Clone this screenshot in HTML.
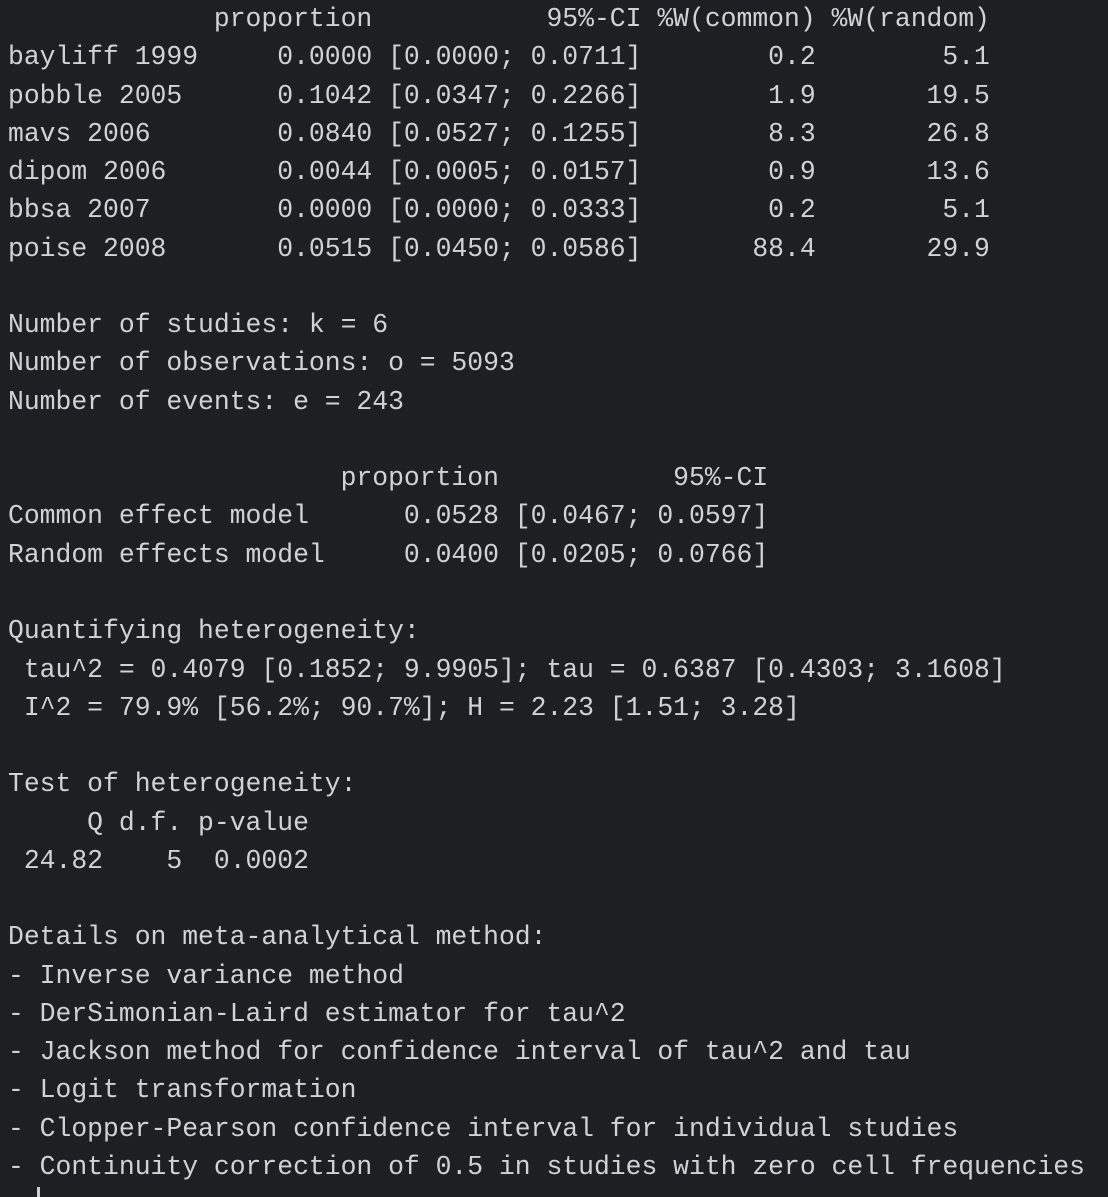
<!DOCTYPE html>
<html><head><meta charset="utf-8"><style>
html,body{margin:0;padding:0;background:#1e1f22;width:1108px;height:1197px;overflow:hidden}
pre{margin:0;position:absolute;left:8px;top:0px;font-family:"Liberation Mono","DejaVu Sans Mono",monospace;font-size:26.4px;line-height:38.27px;color:#d2d2d2;white-space:pre}
.cur{position:absolute;left:37px;top:1187px;width:3px;height:10px;background:#cfcfcf}
</style></head><body>
<pre>             proportion           95%-CI %W(common) %W(random)
bayliff 1999     0.0000 [0.0000; 0.0711]        0.2        5.1
pobble 2005      0.1042 [0.0347; 0.2266]        1.9       19.5
mavs 2006        0.0840 [0.0527; 0.1255]        8.3       26.8
dipom 2006       0.0044 [0.0005; 0.0157]        0.9       13.6
bbsa 2007        0.0000 [0.0000; 0.0333]        0.2        5.1
poise 2008       0.0515 [0.0450; 0.0586]       88.4       29.9

Number of studies: k = 6
Number of observations: o = 5093
Number of events: e = 243

                     proportion           95%-CI
Common effect model      0.0528 [0.0467; 0.0597]
Random effects model     0.0400 [0.0205; 0.0766]

Quantifying heterogeneity:
 tau^2 = 0.4079 [0.1852; 9.9905]; tau = 0.6387 [0.4303; 3.1608]
 I^2 = 79.9% [56.2%; 90.7%]; H = 2.23 [1.51; 3.28]

Test of heterogeneity:
     Q d.f. p-value
 24.82    5  0.0002

Details on meta-analytical method:
- Inverse variance method
- DerSimonian-Laird estimator for tau^2
- Jackson method for confidence interval of tau^2 and tau
- Logit transformation
- Clopper-Pearson confidence interval for individual studies
- Continuity correction of 0.5 in studies with zero cell frequencies</pre>
<div class="cur"></div>
</body></html>
